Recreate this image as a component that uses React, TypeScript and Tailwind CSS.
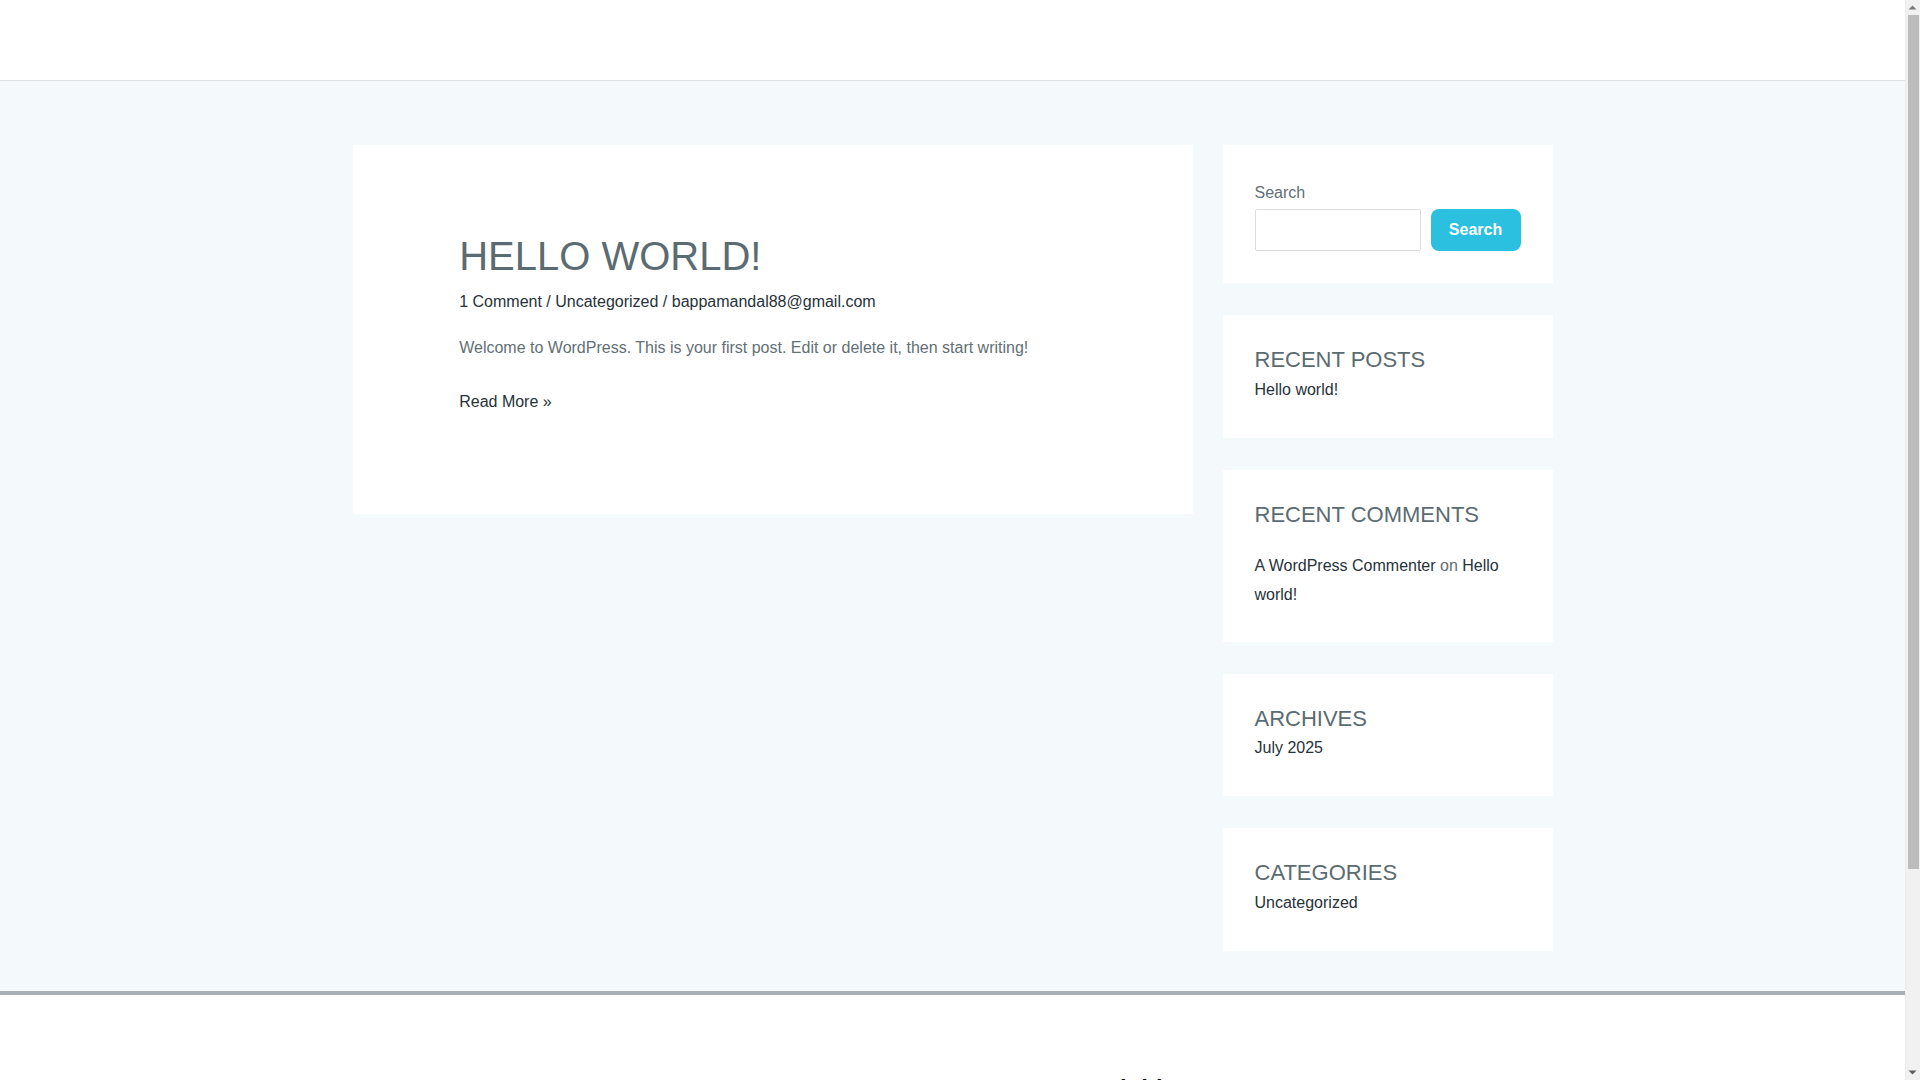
import React from "react";

const FONT = "font-['Liberation_Sans',Arial,sans-serif]";
const LINK = "text-[#27323a]";

function Widget({ title, className, children }: { title?: string; className: string; children: React.ReactNode }) {
  return (
    <section className={`bg-white px-8 ${className}`}>
      {title && <h2 className="text-[22px] leading-[29px] text-[#5b6b72] uppercase">{title}</h2>}
      {children}
    </section>
  );
}

function Scrollbar() {
  return (
    <div className="w-[15px] h-full shrink-0 bg-[#f1f1f1] border-l border-[#ececec] flex flex-col items-center">
      <svg width="15" height="15" viewBox="0 0 15 15" className="shrink-0 ml-[-1px]">
        <polygon points="3.5,9.5 11.5,9.5 7.5,5.5" fill="#7a7a7a" />
      </svg>
      <div className="w-[11px] h-[854px] bg-[#bcbcbc] shrink-0" />
      <div className="flex-1" />
      <svg width="15" height="15" viewBox="0 0 15 15" className="shrink-0 ml-[-1px]">
        <polygon points="3.5,5.5 11.5,5.5 7.5,9.5" fill="#5f5f5f" />
      </svg>
    </div>
  );
}

export default function App() {
  return (
    <div className={`h-screen overflow-hidden flex bg-white text-[16px] text-[#626f75] ${FONT}`}>
      <div className="w-[1905px] shrink-0">
        <header className="h-[81px] bg-white border-b border-[#dfe1e2]" />

        <main className="bg-[#f4f9fb] pt-16 pb-10">
          <div className="w-[1200px] ml-[352.5px] flex items-start">
            {/* Post */}
            <article className="w-[840px] h-[369px] bg-white px-[106.7px] pt-[87px]">
              <h1 className="text-[40px] leading-[48px] text-[#5b6b72] uppercase">Hello World!</h1>
              <div className={`mt-[10px] leading-6 ${LINK}`}>
                1 Comment / Uncategorized / bappamandal88@gmail.com
              </div>
              <p className="mt-[22px] leading-6">
                Welcome to WordPress. This is your first post. Edit or delete it, then start writing!
              </p>
              <a className={`block mt-[30px] leading-6 ${LINK}`}>Read More »</a>
            </article>

            {/* Sidebar */}
            <aside className="w-[330px] ml-[30px] flex flex-col gap-8">
              <Widget className="h-[138px] pt-[36px]">
                <div className="leading-6">Search</div>
                <div className="mt-[4px] flex gap-[10px]">
                  <input className="w-[166px] h-[42px] border border-[#dddddd] rounded-[2px] bg-white" />
                  <button className="w-[90px] h-[42px] rounded-lg bg-[#2bc0e0] text-white font-bold">Search</button>
                </div>
              </Widget>
              <Widget title="Recent Posts" className="h-[123px] pt-[30px]">
                <a className={`block leading-6 mt-[4px] ${LINK}`}>Hello world!</a>
              </Widget>
              <Widget title="Recent Comments" className="h-[172px] pt-[30px]">
                <p className="mt-[22px] leading-[29px]">
                  <a className={LINK}>A WordPress Commenter</a> on{" "}
                  <a className={LINK}>Hello world!</a>
                </p>
              </Widget>
              <Widget title="Archives" className="h-[122px] pt-[30px]">
                <a className={`block leading-6 mt-[3px] ${LINK}`}>July 2025</a>
              </Widget>
              <Widget title="Categories" className="h-[123px] pt-[30px]">
                <a className={`block leading-6 mt-[4px] ${LINK}`}>Uncategorized</a>
              </Widget>
            </aside>
          </div>
        </main>

        <footer className="border-t-4 border-[#a7b1b5] bg-white h-[340px] pt-[80px]">
          <h2 className="ml-[1120px] text-[24px] leading-[28px] font-bold text-[#111]">lold</h2>
        </footer>
      </div>
      <Scrollbar />
    </div>
  );
}
